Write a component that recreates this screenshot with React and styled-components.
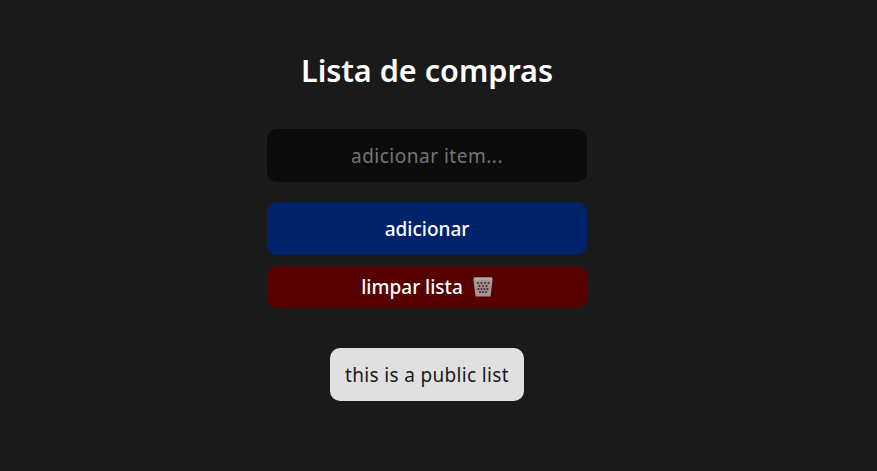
import React, { useState } from 'react';
import styled, { createGlobalStyle } from 'styled-components';

const GlobalStyle = createGlobalStyle`
  * {
    box-sizing: border-box;
  }

  html, body {
    margin: 0;
    height: 100%;
    background-color: #1a1a1a;
    font-family: "Noto Sans", "Open Sans", sans-serif;
    overflow: hidden;
  }
`;

const Page = styled.main`
  width: 854px;
  min-height: 471px;
  display: flex;
  flex-direction: column;
  align-items: center;
  padding-top: 49px;
`;

const Title = styled.h1`
  margin: 0 0 37px;
  height: 43px;
  line-height: 43px;
  font-size: 30.6px;
  font-weight: 600;
  color: #fff;
`;

const Form = styled.form`
  width: 320px;
  display: flex;
  flex-direction: column;
`;

const ItemInput = styled.input`
  width: 100%;
  height: 53px;
  margin-bottom: 20px;
  border: none;
  border-radius: 10px;
  outline: none;
  background-color: #0c0c0c;
  color: #fff;
  font-family: inherit;
  font-size: 19px;
  letter-spacing: 0.5px;
  text-align: center;

  &::placeholder {
    color: #757575;
    opacity: 1;
  }
`;

const Button = styled.button`
  width: 100%;
  height: ${({ $height }) => $height}px;
  margin-bottom: ${({ $gap }) => $gap}px;
  display: flex;
  align-items: center;
  justify-content: center;
  gap: 10px;
  border: none;
  border-radius: 10px;
  background-color: ${({ $color }) => $color};
  color: #fff;
  font-family: inherit;
  font-size: 19px;
  font-weight: 500;
  cursor: pointer;
`;

const PublicBadge = styled.button`
  height: 53px;
  margin-top: 40px;
  padding: 0 15px;
  border: none;
  border-radius: 10px;
  background-color: #e0e0e0;
  color: #1a1a1a;
  font-family: inherit;
  font-size: 19px;
  letter-spacing: 0.33px;
  cursor: pointer;
`;

const meshHoles = [
  [5, 6], [8.5, 6], [12, 6], [15.5, 6],
  [6.5, 9], [10, 9], [13.5, 9],
  [5.5, 12], [8.5, 12], [11.5, 12], [14.5, 12],
  [7, 15], [10, 15], [13, 15],
];

const TrashIcon = () => (
  <svg width="20" height="20" viewBox="0 0 20 20" aria-hidden="true">
    <path d="M1 .5h18l.5 3L17.500 19.500h-15L.5 3.500z" fill="#9d9797" />
    <path d="M1 .5h18l.4 2.500H.6z" fill="#aeaaaa" />
    {meshHoles.map(([x, y]) => (
      <path
        key={`${x}-${y}`}
        d={`M${x} ${y - 1.3}l1.300 1.300L${x} ${y + 1.3}l-1.300-1.300z`}
        fill="#5f1c1c"
      />
    ))}
  </svg>
);

const App = () => {
  const [item, setItem] = useState('');

  return (
    <Page>
      <GlobalStyle />
      <Title>Lista de compras</Title>
      <Form onSubmit={(e) => e.preventDefault()}>
        <ItemInput
          value={item}
          onChange={(e) => setItem(e.target.value)}
          placeholder="adicionar item..."
        />
        <Button type="submit" $height={53} $gap={11} $color="#00236b">
          adicionar
        </Button>
        <Button type="button" $height={42} $gap={0} $color="#570000">
          limpar lista
          <TrashIcon />
        </Button>
      </Form>
      <PublicBadge type="button">this is a public list</PublicBadge>
    </Page>
  );
};

export default App;
